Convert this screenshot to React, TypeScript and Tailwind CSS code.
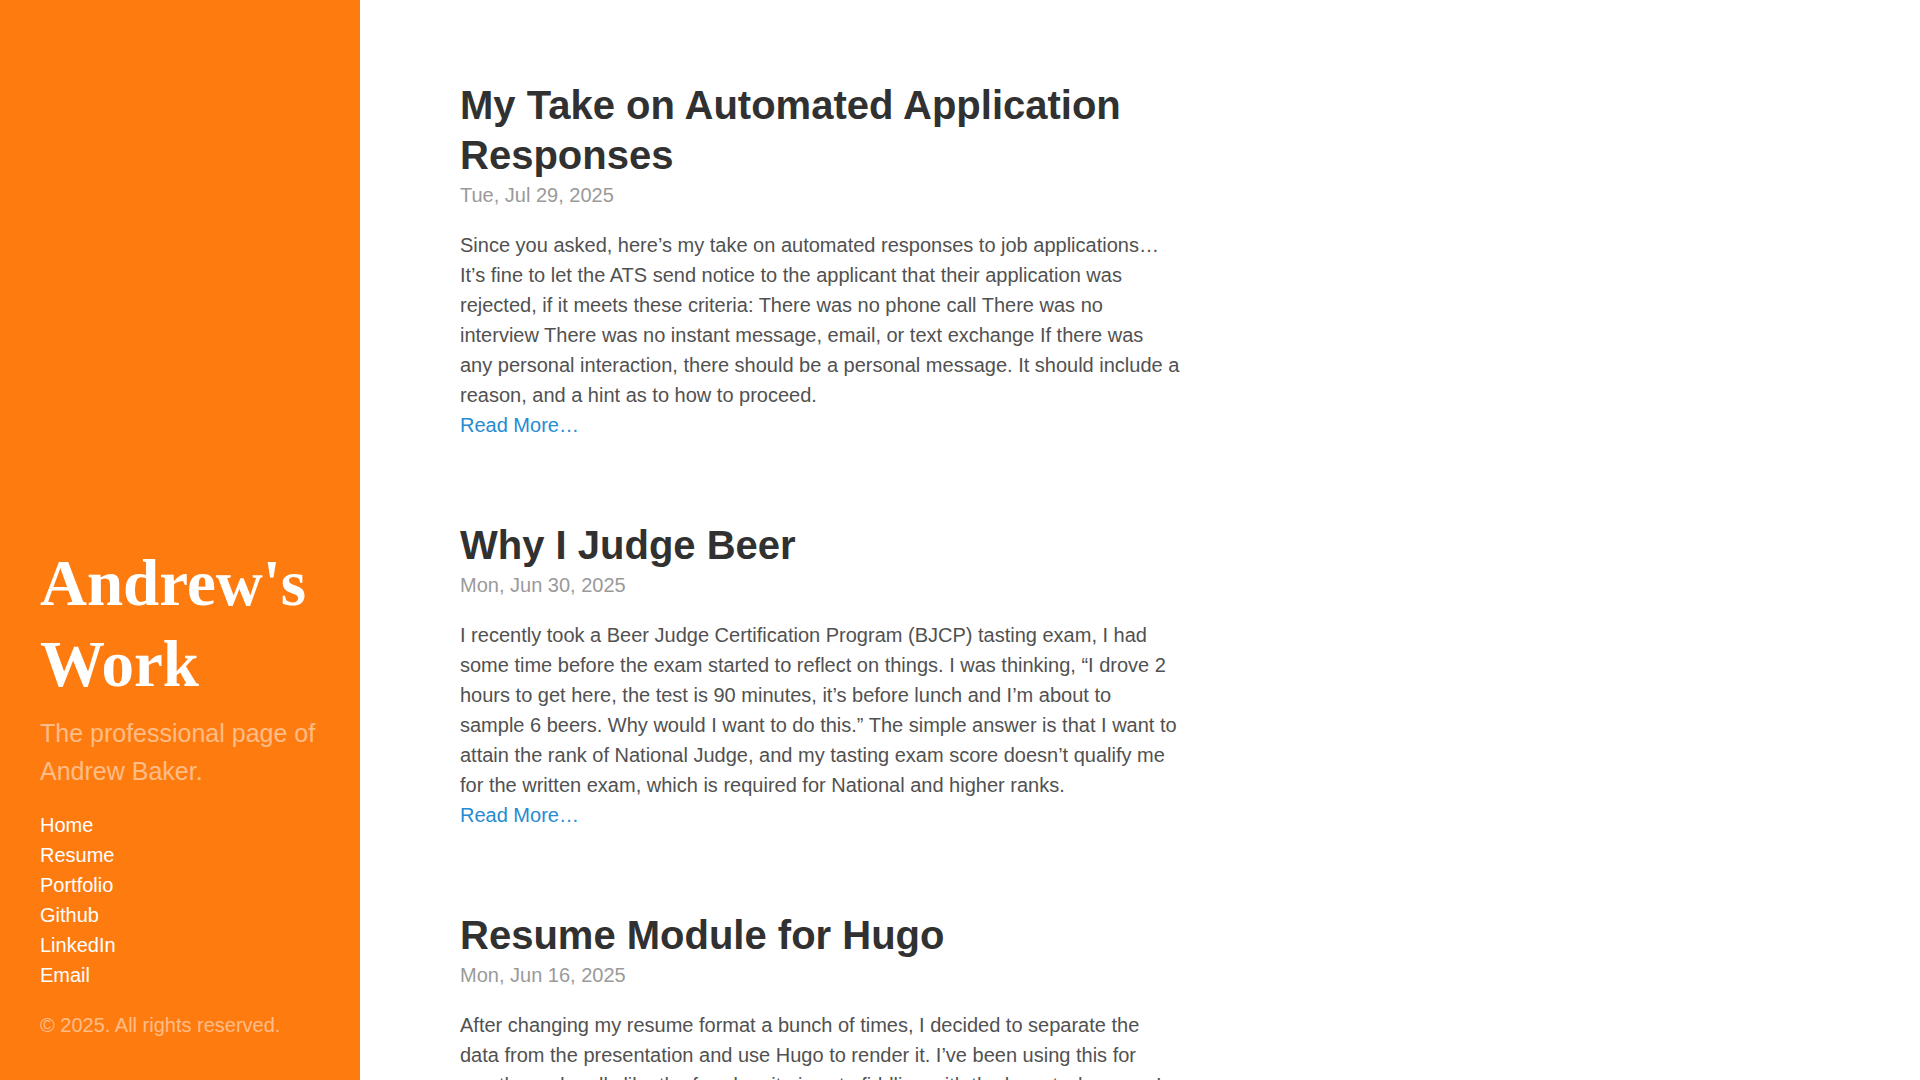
import React from "react";

interface Post {
	title: string;
	date: string;
	summary: string;
}

const posts: Post[] = [
	{
		title: "My Take on Automated Application Responses",
		date: "Tue, Jul 29, 2025",
		summary:
			"Since you asked, here’s my take on automated responses to job applications… It’s fine to let the ATS send notice to the applicant that their application was rejected, if it meets these criteria: There was no phone call There was no interview There was no instant message, email, or text exchange If there was any personal interaction, there should be a personal message. It should include a reason, and a hint as to how to proceed.",
	},
	{
		title: "Why I Judge Beer",
		date: "Mon, Jun 30, 2025",
		summary:
			"I recently took a Beer Judge Certification Program (BJCP) tasting exam, I had some time before the exam started to reflect on things. I was thinking, “I drove 2 hours to get here, the test is 90 minutes, it’s before lunch and I’m about to sample 6 beers. Why would I want to do this.” The simple answer is that I want to attain the rank of National Judge, and my tasting exam score doesn’t qualify me for the written exam, which is required for National and higher ranks.",
	},
	{
		title: "Resume Module for Hugo",
		date: "Mon, Jun 16, 2025",
		summary:
			"After changing my resume format a bunch of times, I decided to separate the data from the presentation and use Hugo to render it. I’ve been using this for months and really like the freedom it gives to fiddling with the layout whenever I want. Not that fiddling with the layout is a good use of time, but now the content stays put while the look changes.",
	},
	{
		title: "Notes From a Homebrew Competition",
		date: "Sat, May 24, 2025",
		summary:
			"Stewarding and judging at a local homebrew competition is one of the best ways to learn about beer. You taste a wide range of styles side by side, you hear how other judges describe what they find, and you get a feel for how consistent your own palate is. This year I judged three flights and learned something from every one of them.",
	},
	{
		title: "Keeping a Work Log",
		date: "Thu, Apr 17, 2025",
		summary:
			"For the past year I have kept a simple text file with a line or two about what I did each day. It takes less than a minute, and it has paid for itself many times over. Performance reviews, status reports and even the occasional question of “when did we change that?” are all easier to answer.",
	},
	{
		title: "Migrating This Site to Hugo",
		date: "Sun, Mar 9, 2025",
		summary:
			"This site has lived on a few different platforms over the years. The latest move was to Hugo with a lightly modified Hyde theme. The build is fast, the output is plain HTML, and hosting it costs next to nothing. Here is what the migration looked like and a few things I would do differently next time.",
	},
	{
		title: "What I Look For in a Code Review",
		date: "Fri, Feb 14, 2025",
		summary:
			"A good code review is a conversation, not a gate. I try to read the change the way the next person to maintain it will read it. Is the intent clear? Are the names honest? Is there a test that would fail if the behaviour broke? Style nits come last, and most of the time a linter should catch them anyway.",
	},
	{
		title: "Brewing a Better Pale Ale",
		date: "Wed, Jan 22, 2025",
		summary:
			"Pale ale is a simple style on paper, which is exactly why it is hard to brew well. There is nowhere for flaws to hide. After a dozen batches I have settled on a short list of changes that made the biggest difference: water chemistry, fermentation temperature control, and a much lighter hand with crystal malt.",
	},
	{
		title: "Lessons From Running an On-Call Rotation",
		date: "Tue, Dec 10, 2024",
		summary:
			"Being on call should be boring. When it is not, that is a signal that something upstream needs attention. Over the last two years our team cut pages by more than half by treating every alert as a bug report, writing short runbooks, and being willing to delete alerts that nobody acted on.",
	},
	{
		title: "Automating My Home Lab",
		date: "Sat, Nov 16, 2024",
		summary:
			"My home lab started as a single old desktop and slowly grew into a small rack. Rebuilding it by hand every time something broke got old fast, so I moved everything into configuration files. Now a fresh machine goes from bare metal to useful in about twenty minutes, and I actually know what is running on it.",
	},
	{
		title: "Why I Still Write Things Down",
		date: "Mon, Oct 7, 2024",
		summary:
			"Writing is thinking made visible. When I write a design document, I find the gaps in my own understanding long before a reviewer does. It also gives the people who come later a chance to understand not just what we built, but why we built it that way.",
	},
	{
		title: "A Short Guide to BJCP Styles",
		date: "Thu, Sep 12, 2024",
		summary:
			"The BJCP style guidelines can look intimidating at first. There are a lot of categories and a lot of words. The trick is to learn the families first, then the differences between neighbours. Once you can explain why a beer is an American IPA and not an English IPA, the rest starts to fall into place.",
	},
	{
		title: "Hello, World",
		date: "Sun, Aug 18, 2024",
		summary:
			"Welcome to the new site. This is where I will post the occasional note about software, careers, and beer. The resume and portfolio pages are linked in the sidebar, and you can reach me by email or on LinkedIn if you would like to talk.",
	},
];

const navItems = ["Home", "Resume", "Portfolio", "Github", "LinkedIn", "Email"];

function PostItem({ post }: { post: Post }) {
	return (
		<article className="mb-[80px]">
			<h1 className="mb-[10px] text-[40px] font-bold leading-[1.25] text-[#313131]">
				<a href="#">{post.title}</a>
			</h1>
			<time className="-mt-[10px] mb-[20px] block text-[#9a9a9a]">{post.date}</time>
			<p>{post.summary}</p>
			<div>
				<a href="#" className="text-[#268bd2]">
					Read More…
				</a>
			</div>
		</article>
	);
}

export default function App() {
	return (
		<div className="h-screen overflow-y-scroll bg-white font-['Liberation_Sans',Arial,sans-serif] text-[20px] leading-[1.5] text-[#515151]">
			<div className="flex">
				<aside className="sticky top-0 flex h-screen w-[360px] shrink-0 flex-col justify-end bg-[#fe7b10] px-[40px] pb-[20px] text-white/50">
					<h1 className="mb-[10px] font-['Liberation_Serif',serif] text-[65px] font-bold leading-[1.25] text-white">
						Andrew's Work
					</h1>
					<p className="mb-[20px] text-[25px] font-light leading-[1.5]">
						The professional page of Andrew Baker.
					</p>
					<nav className="mb-[20px]">
						{navItems.map((item) => (
							<a key={item} href="#" className="block text-white">
								{item}
							</a>
						))}
					</nav>
					<p className="mb-[20px]">© 2025. All rights reserved.</p>
				</aside>
				<main className="ml-[80px] w-[760px] shrink-0 px-[20px] pt-[80px] pb-[80px]">
					{posts.map((post) => (
						<PostItem key={post.title} post={post} />
					))}
					<div className="flex text-[#9a9a9a]">
						<span className="rounded-l-full border border-[#eee] px-[20px] py-[10px]">Older</span>
						<span className="-ml-px rounded-r-full border border-[#eee] px-[20px] py-[10px]">Newer</span>
					</div>
				</main>
			</div>
		</div>
	);
}
